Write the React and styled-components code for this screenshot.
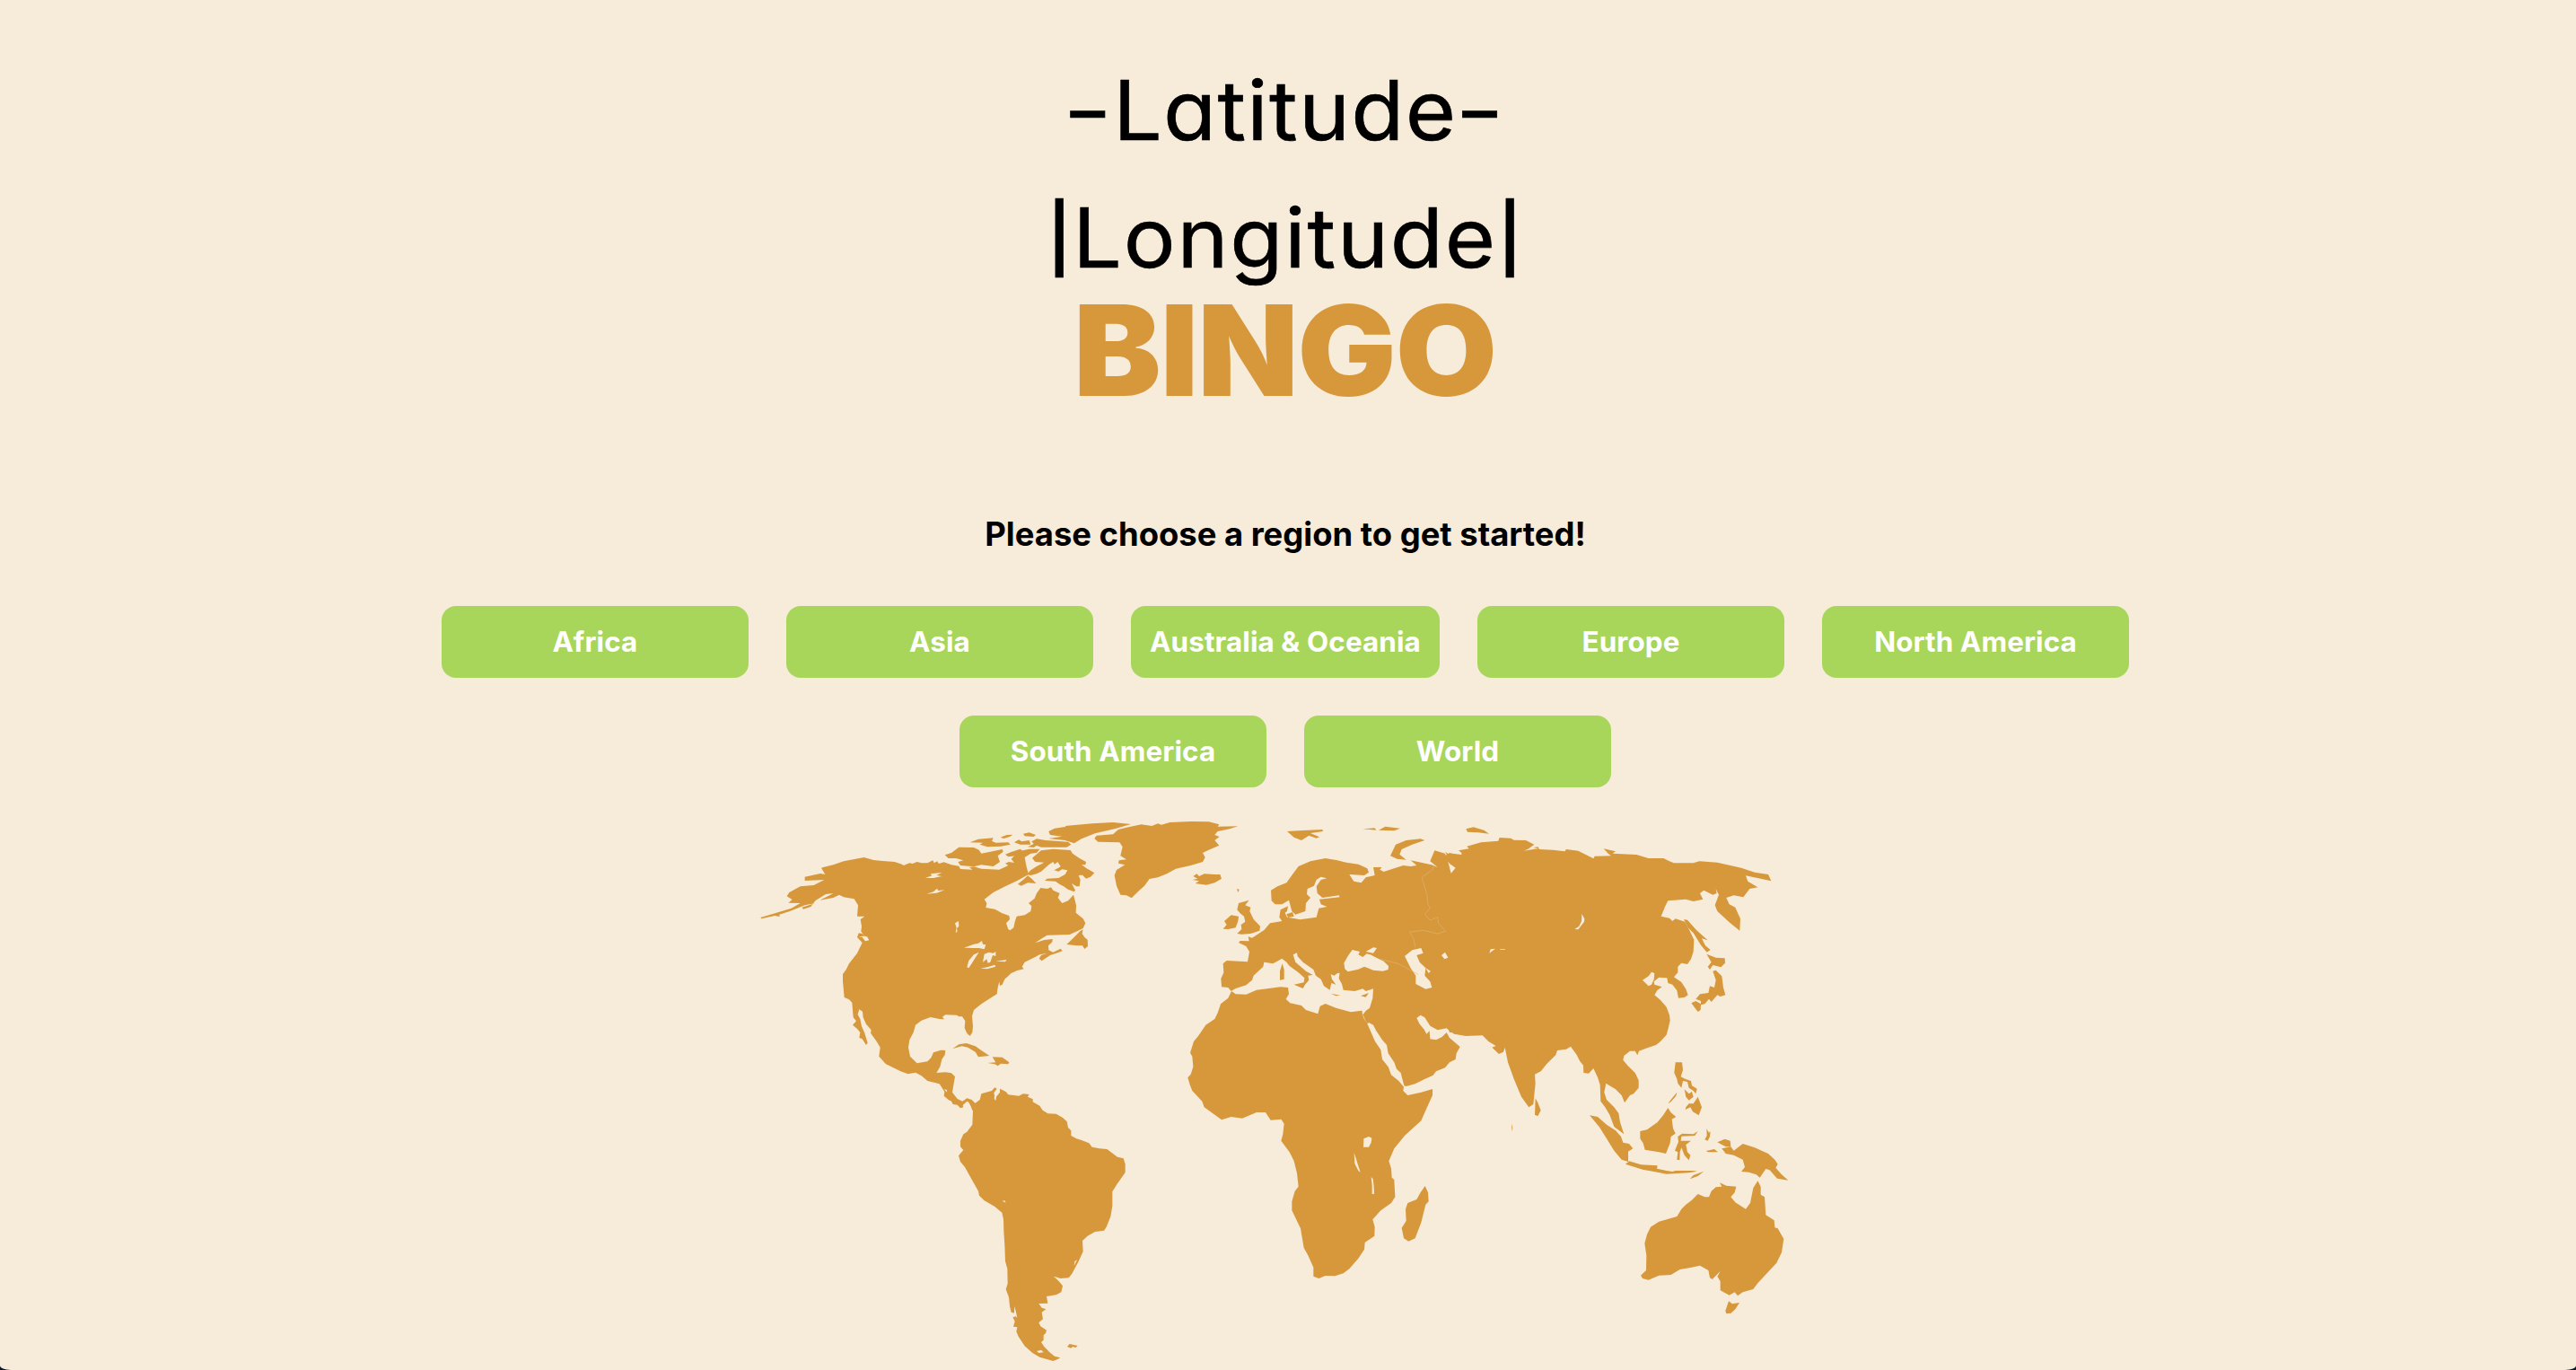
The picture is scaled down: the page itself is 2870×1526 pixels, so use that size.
import React from "react";
import styled, { createGlobalStyle } from "styled-components";

const cream = "#f7ebda";
const ochre = "#d7983b";
const leaf = "#a7d65b";

const GlobalStyle = createGlobalStyle`
  * { box-sizing: border-box; }
  html { background: #0c1828; }
  body { margin: 0; font-family: Inter, "Liberation Sans", sans-serif; }
`;

const Page = styled.main`
  height: 1526px;
  padding: 52px 6px 0 0;
  overflow: hidden;
  display: flex;
  flex-direction: column;
  align-items: center;
  background: ${cream};
  border-radius: 0 0 12px 12px / 0 0 5px 5px;
`;

const Title = styled.h1`
  margin: 0;
  display: flex;
  flex-direction: column;
  align-items: center;
  font-weight: 400;
  font-size: 92px;
  line-height: 142px;
  color: #000;
  white-space: nowrap;
`;

const TitleLine = styled.span`
  font-feature-settings: "cv11" 1, "calt" 0;
  letter-spacing: ${(p) => p.$track};
  margin-right: ${(p) => p.$shift};
  transform: scaleX(1.05);
  -webkit-text-stroke: 0.6px #000;
`;

const Edge = styled.span`
  display: inline-block;
  letter-spacing: 0;
  margin: 0 ${(p) => p.$gap};
  transform: ${(p) => p.$stretch};
`;

const Bingo = styled.span`
  height: 132px;
  margin-top: -19px;
  line-height: 146px;
  font-size: 140px;
  font-weight: 900;
  letter-spacing: -1px;
  color: ${ochre};
  transform: scaleX(1.044);
`;

const Prompt = styled.h2`
  margin: 124px 0 0;
  font-size: 36.4px;
  line-height: 44px;
  font-weight: 700;
  letter-spacing: 0;
  color: #000;
`;

const Regions = styled.nav`
  width: 1900px;
  margin-top: 58px;
  display: flex;
  flex-wrap: wrap;
  justify-content: center;
  gap: 42px;
`;

const RegionButton = styled.button`
  width: ${(p) => (p.$wide ? 344 : 342)}px;
  height: 80px;
  padding: 1px 0 0;
  border: 0;
  border-radius: 16px;
  background: ${leaf};
  color: #fff;
  font: 700 31.4px/79px Inter, "Liberation Sans", sans-serif;
  letter-spacing: 0.1px;
  white-space: nowrap;
`;

const Map = styled.svg`
  display: block;
  flex: none;
  width: 1160px;
  height: 626px;
  margin: 23px 0 0 -24px;
`;

const regions = ["Africa", "Asia", "Australia & Oceania", "Europe", "North America", "South America", "World"];

function WorldMap() {
  return (
    <Map viewBox="0 0 3480 1878" role="img" aria-label="World map">
      <g fill={ochre}>
        {/* North America */}
        <path d="M232,198 L265,190 L300,178 L368,165 L400,174 L430,177 L470,180 L495,188 L500,192 L520,184 L530,186 L545,180 L560,184 L580,184 L598,175 L602,184 L612,178 L618,186 L635,181 L660,190 L685,194 L690,204 L730,206 L720,198 L735,196 L760,203 L820,206 L850,192 L840,185 L852,180 L870,183 L860,170 L885,145 L920,137 L955,137 L945,150 L925,152 L905,165 L908,182 L912,200 L918,222 L900,232 L880,243 L840,262 L800,282 L770,305 L778,318 L775,333 L805,338 L830,352 L853,360 L855,372 L843,385 L850,405 L856,409 L868,400 L872,380 L878,362 L905,358 L925,345 L928,328 L918,318 L938,302 L945,285 L958,267 L980,270 L993,265 L1000,275 L1022,285 L1016,300 L1030,318 L1050,310 L1068,290 L1072,305 L1077,325 L1076,350 L1100,370 L1108,385 L1100,402 L1080,412 L1055,423 L980,425 L960,437 L940,451 L970,441 L998,438 L997,448 L984,460 L985,475 L1000,482 L1025,470 L1031,478 L1015,484 L990,492 L962,511 L953,503 L960,492 L978,486 L955,490 L940,498 L905,515 L896,530 L902,538 L880,543 L860,552 L838,572 L830,590 L822,594 L820,580 L815,600 L812,622 L795,632 L760,655 L735,675 L729,695 L732,730 L730,750 L722,762 L712,753 L704,735 L706,712 L696,697 L685,697 L678,692 L640,691 L630,698 L636,706 L628,706 L620,705 L590,699 L560,710 L540,725 L533,750 L520,775 L516,800 L522,830 L545,853 L580,847 L592,835 L600,817 L625,809 L640,810 L638,825 L628,840 L622,865 L610,885 L640,883 L660,886 L672,898 L668,920 L663,950 L680,972 L697,980 L712,970 L728,975 L740,987 L770,1010 L730,1010 L722,985 L712,980 L698,993 L700,1000 L690,1003 L680,992 L665,990 L660,980 L650,975 L635,962 L637,948 L620,922 L580,912 L560,895 L540,884 L515,889 L490,880 L440,855 L418,830 L422,800 L410,780 L390,752 L392,742 L375,722 L365,700 L363,680 L352,673 L347,690 L355,705 L360,730 L370,752 L380,785 L375,792 L362,772 L352,768 L355,750 L345,738 L330,725 L342,712 L332,700 L328,650 L318,640 L302,633 L297,580 L297,555 L308,540 L318,520 L345,485 L362,450 L345,432 L350,418 L362,420 L372,434 L358,412 L360,395 L356,372 L370,362 L345,362 L348,325 L335,304 L300,298 L285,290 L265,300 L220,308 L250,293 L265,285 L240,288 L205,310 L190,330 L165,338 L160,332 L205,318 L170,325 L120,345 L85,356 L86,363 L70,360 L25,370 L22,366 L50,358 L75,350 L125,335 L155,318 L115,317 L128,306 L110,295 L118,282 L155,262 L200,258 L235,240 L170,243 L170,230 L222,219 L238,222 L225,200Z" />
        {/* Canadian Arctic */}
        <path d="M638,157 L660,150 L685,131 L735,132 L752,140 L760,152 L790,146 L830,138 L833,146 L815,160 L822,180 L800,195 L760,190 L735,196 L690,192 L682,180 L700,175 L675,168 L650,168Z" />
        <path d="M722,115 L750,104 L800,100 L795,110 L808,116 L850,115 L857,122 L825,128 L780,130 L755,122 L765,116Z M824,98 L845,90 L865,89 L855,96 L835,102Z M900,86 L920,82 L942,90 L935,96 L905,94Z M870,115 L885,106 L895,112 L920,108 L925,122 L890,122Z M915,130 L935,120 L928,112 L945,103 L975,108 L1050,113 L1060,122 L1045,131 L960,131 L945,125 L935,132Z M985,78 L1005,68 L1035,64 L1070,60 L1045,66 L1040,60 L1130,52 L1200,48 L1260,54 L1205,70 L1140,85 L1095,103 L1070,118 L1040,108 L985,102 L1030,95 L990,90Z M840,155 L860,147 L890,137 L900,145 L875,160 L850,163Z M882,254 L900,240 L915,226 L930,238 L943,252 L915,250 L893,260Z" />
        <path d="M930,167 L960,142 L1000,137 L1058,141 L1065,152 L1088,168 L1110,180 L1108,190 L1095,190 L1112,202 L1138,217 L1125,230 L1110,236 L1098,224 L1085,225 L1091,240 L1088,262 L1078,262 L1062,252 L1074,275 L1070,280 L1050,272 L1035,262 L1022,255 L1008,245 L972,243 L980,236 L1018,234 L1040,222 L1048,208 L1030,205 L1018,212 L1003,208 L1018,200 L1025,195 L1015,180 L1005,188 L1000,180 L985,190 L972,202 L960,212 L945,220 L925,225 L912,222 L925,208 L945,195 L970,182 L940,180Z" />
        <path d="M1045,456 L1070,432 L1090,412 L1100,406 L1097,420 L1105,432 L1115,440 L1116,462 L1105,471 L1098,460 L1080,460Z" />
        {/* Caribbean */}
        <path d="M664,804 L685,790 L710,786 L740,796 L760,810 L787,828 L750,832 L740,815 L715,800 L695,796Z M782,852 L808,850 L797,832 L830,833 L853,850 L850,856 L825,854 L815,862 L805,856Z" />
        {/* Greenland and Iceland */}
        <g transform="translate(900 0)">
          <path d="M238,102 L245,92 L300,88 L318,72 L345,65 L395,55 L430,60 L450,52 L462,56 L490,48 L560,45 L620,46 L655,55 L650,62 L718,61 L690,70 L650,78 L640,90 L656,96 L640,108 L655,125 L620,140 L600,150 L608,165 L600,180 L560,192 L510,203 L480,220 L450,232 L422,237 L405,260 L385,278 L362,301 L345,292 L325,290 L312,260 L305,225 L312,207 L340,190 L318,185 L320,175 L345,172 L325,160 L332,130 L322,115 L250,113Z" />
          <path d="M568,228 L580,220 L588,228 L605,220 L640,222 L658,222 L663,236 L640,250 L612,257 L575,252 L588,244 L566,240 L583,236Z M714,270 L722,272 L718,282Z" />
        </g>
        {/* South America */}
        <g transform="translate(600 900)">
          <path d="M112,72 L138,88 L155,75 L160,55 L195,45 L205,34 L212,38 L202,52 L206,70 L222,50 L222,38 L242,48 L250,58 L285,62 L300,55 L320,57 L315,65 L332,73 L332,82 L355,95 L365,110 L382,121 L410,122 L432,135 L446,148 L450,168 L460,178 L460,195 L478,205 L495,210 L520,220 L530,233 L555,238 L580,240 L615,266 L635,271 L641,290 L641,318 L615,355 L598,382 L598,430 L592,465 L578,500 L570,512 L540,516 L515,530 L498,546 L500,582 L485,615 L462,658 L452,670 L425,672 L402,665 L418,680 L432,697 L427,718 L410,727 L378,732 L382,755 L352,756 L362,770 L376,775 L362,785 L366,808 L352,820 L358,832 L378,845 L375,855 L368,862 L368,878 L360,885 L370,900 L390,920 L405,932 L424,937 L415,942 L400,948 L355,935 L330,920 L305,898 L285,868 L277,850 L280,835 L267,833 L272,815 L265,802 L278,798 L272,788 L260,785 L255,765 L252,735 L242,708 L248,690 L247,640 L240,615 L238,560 L235,515 L234,475 L229,452 L205,432 L170,412 L153,395 L150,380 L130,345 L105,300 L90,282 L84,262 L100,243 L90,232 L90,212 L100,190 L112,182 L130,158 L132,110Z M447,900 L455,891 L482,897 L475,903 L465,900 L460,905Z" />
        </g>
        {/* Europe and western Asia */}
        <g transform="translate(1380 0)">
          <path d="M1010,750 L945,750 L940,735 L905,742 L880,728 L862,700 L848,692 L835,702 L845,722 L860,740 L868,755 L878,745 L880,772 L900,775 L920,765 L935,750 L945,768 L965,785 L980,798 L968,820 L965,840 L945,850 L930,868 L900,880 L890,893 L860,907 L830,922 L800,930 L793,928 L787,905 L782,885 L768,872 L760,850 L740,820 L735,792 L720,775 L700,745 L690,725 L675,717 L668,724 L656,690 L665,678 L678,668 L688,635 L690,604 L665,612 L655,604 L628,612 L590,608 L585,588 L575,570 L578,550 L605,547 L640,539 L660,530 L690,542 L722,545 L740,540 L741,528 L725,512 L700,500 L680,490 L668,487 L655,498 L640,490 L645,480 L620,474 L605,495 L592,518 L595,538 L607,548 L570,552 L560,560 L548,556 L552,572 L565,590 L550,585 L545,608 L525,595 L515,572 L498,560 L490,540 L455,515 L437,496 L435,484 L422,490 L430,515 L465,545 L488,558 L472,560 L475,575 L462,590 L455,603 L425,590 L458,583 L460,568 L440,550 L410,528 L400,515 L385,503 L355,520 L325,515 L322,530 L290,560 L285,575 L265,592 L230,603 L215,612 L205,600 L183,598 L181,570 L190,550 L188,520 L200,510 L270,514 L276,480 L265,462 L240,450 L245,444 L275,445 L272,430 L285,434 L310,418 L325,408 L345,385 L385,378 L376,365 L380,340 L405,328 L402,345 L395,350 L402,365 L430,370 L445,373 L500,365 L508,335 L535,330 L515,322 L510,305 L578,298 L575,292 L520,300 L503,285 L500,262 L515,240 L535,235 L515,230 L500,240 L492,260 L470,270 L468,288 L480,300 L465,318 L463,345 L430,356 L418,345 L408,308 L385,322 L362,322 L350,310 L348,275 L370,262 L400,250 L425,215 L440,195 L480,178 L530,168 L570,175 L600,182 L640,188 L670,202 L675,215 L660,225 L610,222 L625,245 L650,250 L665,232 L695,225 L690,198 L718,198 L712,206 L725,213 L755,203 L790,192 L815,195 L835,192 L815,175 L885,190 L905,198 L880,178 L895,142 L930,152 L940,180 L950,218 L965,200 L945,185 L930,160 L945,150 L1010,165Z" />
          <path d="M747,160 L765,122 L800,108 L848,103 L862,108 L820,122 L785,138 L778,155 L800,173 L770,170Z M402,78 L440,76 L520,72 L522,78 L480,84 L510,97 L500,101 L475,92 L450,108 L425,98Z M655,70 L695,67 L700,74Z M708,74 L730,62 L780,68 L760,76Z M1000,70 L1025,64 L1060,74 L1077,86 L1040,82 L1005,80Z" />
          <path d="M235,420 L250,405 L248,390 L262,380 L258,362 L245,352 L235,340 L240,318 L275,308 L262,325 L280,332 L277,345 L290,372 L312,395 L310,410 L280,420 L250,422Z M188,404 L200,390 L192,378 L215,358 L240,362 L238,378 L230,400 L205,405Z M378,545 L386,520 L392,540 L392,572 L378,575Z M548,620 L580,626 L565,628Z M648,628 L675,618 L665,632Z M400,355 L420,348 L425,362 L405,366Z" />
        </g>
        {/* Asia */}
        <g transform="translate(2100 0)">
          <path d="M265,150 L255,142 L290,136 L283,128 L330,115 L388,110 L392,99 L430,101 L440,107 L480,108 L508,122 L490,135 L520,130 L525,138 L570,140 L610,145 L615,138 L655,143 L685,158 L706,169 L710,161 L765,160 L755,152 L740,136 L780,145 L770,152 L850,156 L890,168 L940,168 L960,178 L975,184 L1040,184 L1060,178 L1120,182 L1200,200 L1245,215 L1290,222 L1300,244 L1215,226 L1222,245 L1255,265 L1228,270 L1207,298 L1175,292 L1150,300 L1160,322 L1180,332 L1190,355 L1197,370 L1195,410 L1160,382 L1120,345 L1112,325 L1125,290 L1115,270 L1118,285 L1105,290 L1075,275 L1062,285 L1072,305 L1040,312 L1015,305 L955,310 L945,330 L932,362 L960,368 L970,378 L980,370 L1012,380 L1025,405 L1042,440 L1040,480 L1032,505 L1020,522 L1000,518 L988,530 L988,550 L975,565 L1000,582 L1015,605 L1022,625 L1010,633 L990,635 L985,610 L970,590 L955,585 L952,568 L925,566 L908,580 L910,590 L935,598 L920,608 L910,625 L930,642 L950,665 L960,692 L962,710 L955,740 L950,758 L930,780 L915,792 L890,800 L858,812 L853,826 L845,812 L828,812 L808,828 L805,842 L820,860 L845,885 L857,910 L857,935 L840,955 L828,960 L810,985 L800,960 L780,940 L755,925 L748,920 L742,950 L750,975 L775,1000 L790,1020 L795,1050 L808,1090 L775,1065 L760,1025 L745,1000 L730,980 L728,925 L720,900 L706,870 L690,887 L673,885 L672,860 L660,845 L650,825 L630,797 L615,806 L585,810 L580,825 L550,855 L530,880 L510,890 L512,920 L508,960 L505,990 L490,1000 L465,965 L440,905 L420,850 L410,800 L405,815 L390,822 L367,800 L380,795 L355,780 L335,760 L280,762 L240,755 L220,740 L215,735 L265,500Z M512,970 L520,985 L530,1010 L520,1030 L510,1025Z M432,1055 L436,1068 L434,1082Z" />
          <path d="M210,146 L222,154 L218,160Z M232,152 L285,158 L270,175 L230,190 L215,175 L235,168Z" />
        </g>
        {/* Japan and Sakhalin */}
        <g transform="translate(2700 0)">
          <path d="M408,372 L420,374 L450,408 L488,442 L468,436 L480,460 L497,474 L485,482 L465,458 L440,418 L422,400Z M484,488 L515,500 L545,502 L546,518 L532,532 L505,525 L495,540 L488,530 L500,515Z M505,545 L515,542 L535,562 L540,600 L547,625 L530,630 L520,625 L500,648 L492,638 L478,655 L465,658 L465,645 L448,638 L462,622 L490,618 L495,595 L510,600 L515,575Z M433,652 L448,645 L465,655 L464,675 L455,681Z" />
        </g>
        {/* Africa and Madagascar */}
        <g transform="translate(1380 720)">
          <path d="M216,-108 L230,-98 L265,-97 L300,-112 L380,-122 L405,-120 L408,-98 L398,-82 L412,-68 L450,-60 L465,-45 L505,-32 L512,-58 L530,-66 L565,-52 L615,-38 L652,-43 L658,-18 L672,5 L696,60 L715,88 L720,120 L740,145 L750,172 L775,192 L792,212 L790,225 L805,240 L850,230 L888,219 L888,240 L870,280 L850,325 L795,375 L760,418 L742,460 L750,485 L752,515 L760,522 L763,580 L750,600 L715,625 L688,655 L695,680 L694,710 L662,732 L660,755 L640,785 L610,820 L590,835 L562,844 L530,843 L508,852 L490,845 L490,815 L472,775 L458,750 L447,685 L418,625 L418,595 L428,560 L440,545 L435,500 L425,460 L410,430 L382,392 L388,370 L392,335 L382,320 L347,323 L330,297 L300,297 L252,317 L215,312 L183,322 L125,280 L118,260 L85,225 L77,205 L70,181 L80,170 L88,145 L85,110 L78,98 L90,60 L105,42 L130,5 L160,-15 L170,-35 L180,-65 L205,-85Z M863,543 L873,565 L875,595 L865,605 L850,665 L830,718 L808,728 L792,718 L785,683 L800,660 L798,620 L805,600 L835,588 L848,565Z" />
        </g>
        {/* Islands of Southeast Asia, Australia */}
        <g transform="translate(2700 720)">
          <path d="M93,307 L120,312 L150,338 L180,358 L198,378 L205,398 L225,402 L238,418 L222,428 L222,462 L200,455 L175,425 L150,385 L125,345Z M213,470 L225,460 L265,472 L320,475 L318,485 L350,492 L370,495 L380,492 L440,492 L452,494 L425,499 L350,503 L320,497 L270,488Z M428,520 L440,507 L475,494 L455,510Z M262,360 L285,355 L320,330 L340,305 L355,282 L365,298 L382,312 L368,320 L372,350 L380,368 L365,378 L362,400 L348,435 L325,430 L278,422 L272,400 L262,385Z M355,268 L370,248 L385,230 L382,242 L365,262Z M388,378 L402,368 L440,370 L455,360 L445,375 L400,377 L398,392 L432,392 L415,405 L420,430 L430,440 L425,457 L410,440 L400,415 L395,430 L394,457 L385,455 L388,430 L378,425 L390,395Z M484,352 L492,365 L497,360 L495,378 L488,392 L478,388 L485,375Z M482,426 L510,420 L522,430 L490,430Z M520,397 L545,386 L563,392 L565,412 L548,412Z M535,418 L565,412 L575,425 L605,402 L645,415 L690,435 L712,455 L722,470 L715,482 L735,505 L757,524 L720,518 L695,490 L682,486 L662,515 L650,505 L625,497 L600,495 L612,480 L605,455 L575,440 L548,435Z" />
          <path d="M380,130 L402,130 L405,155 L398,178 L412,185 L432,192 L435,208 L452,218 L448,235 L440,225 L425,215 L420,195 L405,192 L400,215 L388,200 L385,185 L376,165Z M410,220 L425,235 L435,228 L440,245 L425,257 L415,245Z M415,280 L425,268 L440,268 L455,245 L468,280 L458,307 L438,295 L430,280 L413,288Z" />
          <path d="M655,526 L665,545 L665,572 L678,580 L682,640 L710,658 L712,682 L722,685 L742,720 L735,765 L718,800 L690,830 L655,868 L640,888 L605,898 L588,910 L578,898 L560,908 L530,892 L530,862 L520,845 L508,858 L495,850 L490,825 L462,809 L430,816 L395,822 L365,840 L325,842 L290,857 L270,852 L264,842 L282,825 L283,775 L277,735 L285,705 L297,680 L325,662 L385,645 L400,620 L415,605 L435,590 L455,570 L478,580 L492,580 L500,560 L515,547 L535,545 L528,532 L550,542 L583,545 L578,565 L565,580 L580,598 L615,620 L630,600 L640,550Z M558,928 L570,937 L594,933 L580,955 L565,968 L550,970 L547,960Z" />
        </g>
      </g>
      {/* Lakes, inland seas and inlets */}
      <g fill={cream}>
        <path d="M573,234 L595,226 L590,220 L628,216 L610,225 L628,228 L600,234Z M577,287 L600,280 L612,269 L616,276 L638,274 L610,284Z M672,385 L684,378 L685,395 L678,402 L680,412 L674,418 L677,400Z M702,467 L735,455 L750,452 L762,444 L765,455 L775,457 L770,472 L752,468 L735,468Z M712,532 L718,510 L735,490 L752,482 L740,500 L728,520 L718,535Z M770,488 L785,482 L800,485 L808,480 L808,495 L798,492 L790,515 L782,518 L778,505 L765,515Z M757,536 L780,532 L805,524 L808,530 L780,538Z M808,512 L845,507 L840,514Z M350,430 L362,432 L372,445 L385,442 L378,430 L368,428Z" />
        <path d="M636,940 L645,942 L645,950Z M804,962 L810,965 L808,978 L803,972Z M830,1313 L838,1312 L842,1319Z M870,1665 L875,1680 L880,1705 L870,1690Z M945,1815 L960,1811 L968,1819 L952,1821Z" />
        <path d="M1072,1515 L1080,1510 L1070,1530Z" />
        <g transform="translate(1380 0)">
          <path d="M795,495 L820,475 L850,468 L857,485 L835,492 L845,515 L865,535 L862,560 L880,580 L886,600 L865,605 L832,588 L832,560 L815,535Z M865,535 L882,545 L875,552Z M918,492 L930,482 L940,500 L928,505Z M1078,485 L1082,472 L1098,470 L1085,480Z M665,480 L690,466 L702,468 L690,485Z M1114,471 L1130,471 L1130,473 L1114,473Z" />
          <path d="M892,190 L890,205 L852,232 L870,290 L872,320 L880,335 L862,355 L880,375 L905,365 L908,385 L932,412 L905,420 L860,409 L812,414 L826,440 L830,466 M715,505 L775,521 L840,556 M652,684 L660,705 L672,722" fill="none" stroke="#e3b674" strokeWidth="1.8" />
        </g>
        <g transform="translate(2100 0)">
          <path d="M667,354 L676,370 L675,380 L655,406 L643,405 L658,395 L666,378Z M870,575 L890,562 L900,548 L910,552 L908,572 L900,590 L890,595Z M474,143 L500,131 L522,136 L490,140Z" />
        </g>
        <g transform="translate(1380 720)">
          <path d="M658,385 L675,378 L685,383 L683,398 L675,413 L657,413Z M626,432 L632,450 L638,470 L647,497 L640,492 L628,468Z M683,513 L689,520 L692,545 L693,570 L686,570 L686,540Z" />
        </g>
        <path d="M3203,1575 L3230,1548 L3218,1570 L3225,1575 L3210,1580Z" />
      </g>
    </Map>
  );
}

export default function App() {
  return (
    <Page>
      <GlobalStyle />
      <Title>
        <TitleLine $track="1.2px" $shift="1px">
          <Edge $gap="1.5px" $stretch="translateX(-5px) scaleX(1.24)">-</Edge>Latitude<Edge $gap="1.5px" $stretch="translateX(1px) scaleX(1.24)">-</Edge>
        </TitleLine>
        <TitleLine $track="1.7px" $shift="0">
          <Edge $gap="-1px" $stretch="translateY(1px) scale(1.15, 0.8)">|</Edge>Longitude<Edge $gap="-1px" $stretch="translate(-1px, 1px) scale(1.15, 0.8)">|</Edge>
        </TitleLine>
        <Bingo>BINGO</Bingo>
      </Title>
      <Prompt>Please choose a region to get started!</Prompt>
      <Regions>
        {regions.map((name) => (
          <RegionButton key={name} $wide={name.includes("&")}>{name}</RegionButton>
        ))}
      </Regions>
      <WorldMap />
    </Page>
  );
}
